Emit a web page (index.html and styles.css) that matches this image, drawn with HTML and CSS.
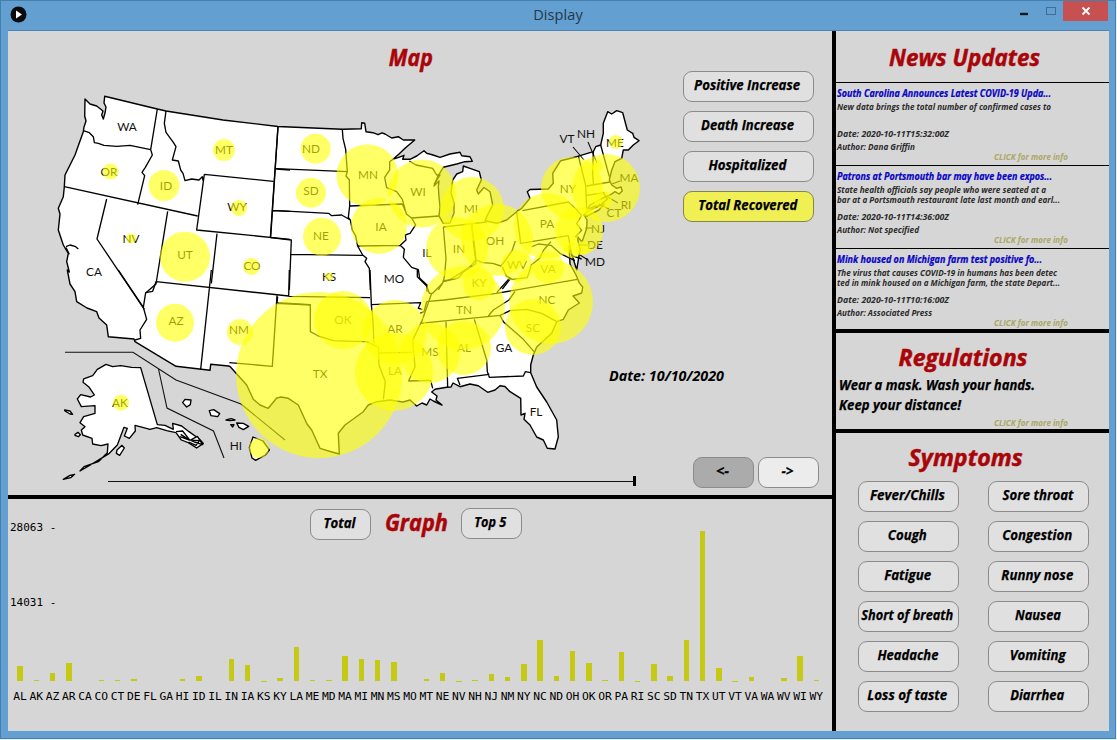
FILE: index.html
```html
<!DOCTYPE html>
<html lang="en">
<head>
<meta charset="utf-8">
<title>Display</title>
<link rel="stylesheet" href="styles.css">
</head>
<body>
<div class="window">
  <header class="titlebar">
    <svg class="app-icon" width="17" height="17" viewBox="0 0 17 17"><circle cx="8.5" cy="8.5" r="8" fill="#080b0e"/><path d="M6 4.5v8l6-4z" fill="#fff"/></svg>
    <span class="window-title">Display</span>
    <div class="controls">
      <svg width="48" height="22" viewBox="0 0 48 22"><path d="M5 13h8" stroke="#0d1a26" stroke-width="2.4"/><rect x="31.5" y="6.5" width="9" height="7" fill="none" stroke="#3f6f96"/></svg>
      <div class="close"><svg width="10" height="10" viewBox="0 0 10 10"><path d="M1.5 1.5l7 7M8.500 1.500l-7 7" stroke="#fff" stroke-width="1.8"/></svg></div>
    </div>
  </header>
  <main class="content">
    <section class="left">
      <div class="map-panel">
        <svg class="map" width="824" height="464" viewBox="8 31 824 464">
          <g class="land">
            <path d="M85 99L90 104 96.700 106 103 111 101.700 115 103.300 119 105 113 106 107 104 103 104.700 96.300 157.300 109 166 111 223 120 278 126.500 342.300 129.300 361.300 128.700 361.700 122.700 364.700 123.300 366 131.700 373 132.700 378 134.700 382 132.800 385 134 391.700 138 398.300 136.700 403.300 140 414.700 140 405 148.300 399 154 393.300 159 398 157.700 404 155.300 402.700 159.300 410 159.300 416.700 156 424 150.700 426.700 153.300 433 155 440 157.300 450 154 460 152.300 461.700 155.700 470 156.700 472.300 161.300 465 161.700 456.700 164 443.300 167.300 438 176 434 186 439 181 438.300 187 439 197 440 207 439 216 443.300 223.300 450 223 454 213 454 203 451 193 452.700 180 456.700 174 462.700 171.700 463.300 166 470 168.300 479.300 171.700 481.300 180 476.700 190 478.300 194 484 187.500 490 191.700 492.700 205 488.300 213.300 485 220.700 497 223.300 506.700 220 516.700 211.700 521.700 208.300 530 198.300 527.300 191.700 530 189.500 548.300 189 553.300 183.300 552.700 173.300 560.700 160.700 576.700 156.700 593.300 151.700 595.700 146.700 600.700 145 603.300 133.300 603.300 123.300 607.700 111.700 611.700 114 616.700 110.700 622.700 112.700 627.300 130 632.700 133.300 634 137.300 639 140.700 633.300 145 628.300 150 623.300 150 621.700 158.300 615 161.700 611.700 170 609.300 180 611.700 185 616.700 188.300 621 187 622.300 191 619 194 615 191.700 610 195 603 198 590 205 584 215 587 220 586.700 228.300 582 242 577 236 580 250 578.300 260 576.700 270 573 258 569 246 570 264 576 275 579.300 283 582.700 287 581.700 293 573 296 579.300 303 568.300 310 563.300 319.300 556.700 321.700 551.700 333.300 536.700 347 533.300 355 530.700 365 530.700 372.700 536.700 387 546.700 402 556.700 420 558.300 437 555 449 547.300 448.300 543.300 440 536.700 437 530 425 524 419.300 525 413.300 521 415 520.700 398.300 510 391.700 505 386.500 500 385.700 495 390 487.700 392.300 478.300 385.700 470 384 460 386.700 453 383 451 387 446.700 387.300 435 389.300 431.700 392 437 396 436 400 442 405 433.300 401 430 399 426.700 405 422 403 416.700 406 410 400 403 402 390 400 376.700 401.700 368.300 405 363.300 411.700 345 425 338.300 433.300 339.300 454 332 452 320 448.300 311.700 430 307 424 298.300 405 288.300 398.300 281 397 276.700 398 268.300 408.300 260 405 253.300 399.300 246.700 385 230 366.500 228.500 366 210.700 364.300 210 370.300 176 366.300 135 341.700 134 339 108.300 336.700 106.700 325 99 318 96.700 311.700 87 308 76.700 301.700 75 291.700 70 284 67.300 270 69.300 272 66.700 261.700 68.300 253.300 63.300 245 58.300 230 60 214 58.300 208.300 63.300 196.700 64.300 187 65 175 75 155 83.300 131.700 84 127 86 121 84.700 116Z"/>
            <path d="M584 215l8-6 12-5-5 6-12 6z"/>
            <g transform="translate(50 270) scale(.33333)">
              <path d="M168 283L188 290 212 287 245 292 272 293 322 464 345 466 370 478 368 460 395 468 417 485 448 507 460 520 440 534 415 518 394 510 378 488 350 482 320 473 300 478 278 472 255 466 256 483 238 505 223 498 232 475 222 472 202 525 178 550 133 578 90 603 102 590 145 575 172 548 174 522 153 527 128 522 126 505 98 495 94 480 105 470 90 458 101 440 135 430 135 407 94 410 82 387 92 374 122 381 133 375 116 350 99 337 101 327 128 317 142 298Z"/>
              <path d="M44 420l16 3 8 10-8-1-15-9zM75 493l9-6 7 7-6 6-10-4zM201 540l15-14 7 8-14 22-10-6zM40 628l20-12 14-3-12 10zM398 398l7-10 18 2-2 14-11 7zM478 422l13-3 18 12-6 9-20-3zM528 450l15-4 12 4-15 2zM542 464l10 0-4 7zM560 459l20 1 16 9-16 10-13-7zM609 501l30 12 19 27-12 15-29 16-11-7-8-31z"/>
              <path d="M378 485l20-2 22 28 22-12 16 25-25-8-18-8-23-15M390 500l28 10 30 2-10 14-22-10"/>
            </g>
          </g>
          <g class="borders">
            <g transform="translate(50 80) scale(.33333)">
              <path d="M100 152L118 158 130 170 133 188 145 190 162 196 200 199 240 196 302 209M322 87L302 209 307 225 286 262 276 277 284 287 263 374M348 93L343 130 348 157 370 187 378 200 367 240 385 243 392 270 399 280 405 302 425 297 447 300 457 290 459 302M463 283L670 304M463 283L440 450 720 478M684 140L661 474M679 267L720 270M668 392L720 394M43 320L443 408M170 357L141 477 283 688M353 394L318 612 286 640M501 461L484 610M48 500l12-5 15 4 10 8M48 503l10 20"/>
            </g>
            <g transform="translate(270 90) scale(.33333)">
              <path d="M24 109L2 443 64 450 58 600M18 236L232 245M8 361L176 370 185 377 215 375 241 390 247 420 257 438 263 468 278 495 290 505 285 515 298 535 301 600M63 493L278 496M217 118L219 145 227 178 232 245 228 258 238 270 239 348 397 342 407 365M239 348L235 382 241 390M263 468L391 466 408 450 406 435 420 430 437 405 425 384 409 372 397 328 380 305 350 293 344 262 359 240 359 215 370 207M425 384L507 378M391 466l12 12-3 24 25 30 20 7 4 26 22 20 0 20M418 213l20 12 50 10 12 20 10 0-18 28M520 411L528 505 524 555 520 575 505 600M520 411L650 396M604 404L618 520M520 575l45-11 15-18 38-26"/>
            </g>
            <g transform="translate(440 90) scale(.33333)">
              <path d="M96 402L108 510 90 530 60 550 28 570 8 573M108 510l20 8 30 2 25 8 15-20 18-25 10-30M230 365L242 460 385 437M247 362l138-26 22 20M407 356l18 20-15 25 15 20-20 20M415 198l22 88 3 72M460 185l-2 65 2 32M482 165l26 95M440 288l70-12M440 316l53-8M490 308l12 20-18 14M440 358l40-15M187 530l12 28 18 10 45-5 12-38 25-20 12-25 22-25M187 597l25-32M275 470l20-8 38 4 27 24 20 10 25 12M385 437l10 60 30 10"/>
            </g>
            <g transform="translate(50 270) scale(.33333)">
              <path d="M205 0L280 112 287 68 308 64 318 35 716 78M280 112L290 148 270 180 272 205 255 210M484 0L452 298M681 77L667 289 538 278M681 100L782 105"/>
            </g>
            <g transform="translate(230 270) scale(.33333)">
              <path d="M178 0L176 79M143 80L141 98 241 104 241 185 265 198 310 212 370 214 410 215 440 230M176 79L420 83M420 0L424 104 429 155 432 226 446 232 447 285 466 335 460 388M424 104L572 98 565 115 577 118M448 249L546 247M605 70L575 155 548 210 555 290 536 333 602 331 608 355M562 0l0 20 28 28 8 22 10 0 30-30"/>
            </g>
            <g transform="translate(420 270) scale(.33333)">
              <path d="M20 95L72 90 230 70 472 28M0 160L240 136 270 122 320 118 365 130 410 155M285 64L267 90 220 120 205 138M240 136L250 155 310 208 342 245M78 155L83 352M163 148L200 270 202 305 208 322 310 318 316 305 332 308M208 313L112 325 120 345M20 95l-8 30-12 5M230 68l40-45"/>
            </g>
          </g>
          <path class="inset" d="M65 352.300H133L176 380 241 404 285 440M158.500 369L167 408 213.500 431 224 458M573 147L584 160M588 142L597 163M620 181l-8 3M618 203l-12-7M609 209l-10-5M592 228h-7M588 245h-9M588 260l-8-5"/>
          <g class="names">
            <text x="127" y="130.500">WA</text><text x="109" y="175.500">OR</text><text x="94" y="276">CA</text><text x="131" y="243">NV</text><text x="166" y="190">ID</text><text x="224" y="154">MT</text><text x="237" y="211">WY</text><text x="185" y="259">UT</text><text x="252" y="270">CO</text><text x="311" y="152.500">ND</text><text x="311" y="195">SD</text><text x="321" y="240">NE</text><text x="329" y="280.500">KS</text><text x="368" y="179">MN</text><text x="381" y="230.500">IA</text><text x="394" y="283">MO</text><text x="418" y="196">WI</text><text x="427" y="257">IL</text><text x="471" y="213">MI</text><text x="459" y="253">IN</text><text x="495" y="245">OH</text><text x="479" y="287">KY</text><text x="517" y="269">WV</text><text x="548" y="273">VA</text><text x="547" y="228">PA</text><text x="568" y="193">NY</text><text x="567" y="143">VT</text><text x="586" y="138">NH</text><text x="615" y="147">ME</text><text x="629" y="182">MA</text><text x="626" y="209">RI</text><text x="614" y="217">CT</text><text x="598" y="233">NJ</text><text x="595" y="249">DE</text><text x="595" y="266">MD</text><text x="176" y="325">AZ</text><text x="239" y="334">NM</text><text x="320" y="378">TX</text><text x="343" y="324">OK</text><text x="395" y="332.500">AR</text><text x="395" y="375">LA</text><text x="430" y="356">MS</text><text x="464" y="352">AL</text><text x="504" y="352">GA</text><text x="464" y="314">TN</text><text x="547" y="304">NC</text><text x="533" y="332">SC</text><text x="536" y="415.500">FL</text><text x="120" y="407">AK</text><text x="236" y="449.500">HI</text>
          </g>
          <g class="bubbles" id="bubbles"></g>
          <path d="M108 481.500H634" stroke="#111" stroke-width="1.200"/><path d="M634.500 476v10" stroke="#000" stroke-width="3"/>
        </svg>
        <div class="overlay">
          <h2 class="heading map-heading"><span data-w="44">Map</span></h2>
          <nav class="metrics">
            <button><span data-w="106">Positive Increase</span></button>
            <button><span data-w="93">Death Increase</span></button>
            <button><span data-w="78">Hospitalized</span></button>
            <button class="active"><span data-w="99">Total Recovered</span></button>
          </nav>
          <p class="date"><span data-w="115" data-left>Date: 10/10/2020</span></p>
          <div class="steps"><button class="prev"><span data-w="13">&lt;-</span></button><button class="next"><span data-w="12">-&gt;</span></button></div>
        </div>
      </div>
      <div class="graph-panel">
        <div class="graph-head"><button><span data-w="32">Total</span></button><h2 class="heading"><span data-w="63">Graph</span></h2><button class="top"><span data-w="32">Top 5</span></button></div>
        <div class="axis"><span>28063 -</span><span>14031 -</span></div>
        <div class="chart" id="chart"></div>
      </div>
    </section>
    <aside class="right">
      <section class="news">
        <h2 class="heading"><span data-w="151">News Updates</span></h2>
        <article>
          <h3><span data-w="214" data-left>South Carolina Announces Latest COVID-19 Upda...</span></h3>
          <div class="desc"><span data-w="214" data-left>New data brings the total number of confirmed cases to</span></div>
          <div class="meta"><span data-w="112" data-left>Date: 2020-10-11T15:32:00Z</span><span data-w="78" data-left>Author: Dana Griffin</span></div>
          <div class="more"><span data-w="74" data-left>CLICK for more info</span></div>
        </article>
        <article>
          <h3><span data-w="215" data-left>Patrons at Portsmouth bar may have been expos...</span></h3>
          <div class="desc"><span data-w="209" data-left>State health officials say people who were seated at a</span><span data-w="223" data-left>bar at a Portsmouth restaurant late last month and earl...</span></div>
          <div class="meta"><span data-w="112" data-left>Date: 2020-10-11T14:36:00Z</span><span data-w="82" data-left>Author: Not specified</span></div>
          <div class="more"><span data-w="74" data-left>CLICK for more info</span></div>
        </article>
        <article>
          <h3><span data-w="205" data-left>Mink housed on Michigan farm test positive fo...</span></h3>
          <div class="desc"><span data-w="220" data-left>The virus that causes COVID-19 in humans has been detec</span><span data-w="223" data-left>ted in mink housed on a Michigan farm, the state Depart...</span></div>
          <div class="meta"><span data-w="112" data-left>Date: 2020-10-11T10:16:00Z</span><span data-w="95" data-left>Author: Associated Press</span></div>
          <div class="more"><span data-w="74" data-left>CLICK for more info</span></div>
        </article>
      </section>
      <section class="rules">
        <h2 class="heading"><span data-w="129">Regulations</span></h2>
        <p><span data-w="196" data-left>Wear a mask. Wash your hands.</span></p>
        <p><span data-w="122" data-left>Keep your distance!</span></p>
        <div class="more"><span data-w="74" data-left>CLICK for more info</span></div>
      </section>
      <section class="symptoms">
        <h2 class="heading"><span data-w="114">Symptoms</span></h2>
        <div class="grid">
          <button><span data-w="75">Fever/Chills</span></button><button><span data-w="71">Sore throat</span></button>
          <button><span data-w="39">Cough</span></button><button><span data-w="70">Congestion</span></button>
          <button><span data-w="47">Fatigue</span></button><button><span data-w="72">Runny nose</span></button>
          <button><span data-w="92">Short of breath</span></button><button><span data-w="46">Nausea</span></button>
          <button><span data-w="61">Headache</span></button><button><span data-w="56">Vomiting</span></button>
          <button><span data-w="80">Loss of taste</span></button><button><span data-w="54">Diarrhea</span></button>
        </div>
      </section>
    </aside>
  </main>
</div>
<script src="app.js"></script>
</body>
</html>
```
FILE: styles.css
```css
* { box-sizing: border-box; }
body { margin: 0; background: #e9f1f8; width: 1117px; height: 740px; overflow: hidden; font-family: "Open Sans", "Noto Sans", sans-serif; }
h2, h3, p { margin: 0; }
.window { width: 1116px; height: 739px; background: #639fd0; border: 1px solid #4380b0; padding: 0 7px 8px; }
.titlebar { height: 29px; display: grid; grid-template-columns: 80px 1fr 80px; }
.app-icon { margin: 5px 0 0 2px; }
.window-title { font-size: 14.5px; line-height: 28px; text-align: center; color: #24384a; letter-spacing: .1px; }
.controls { display: flex; justify-content: flex-end; height: 20px; }
.controls > svg { flex: none; }
.close { width: 45px; height: 20px; flex: none; background: #c75050; display: flex; align-items: center; justify-content: center; }
.content { width: 1101px; height: 701px; display: flex; background: #d6d6d6; border-top: 1px solid #4b85b3; }
.left { width: 828px; border-right: 4px solid #000; flex: none; }
.map-panel { height: 468px; border-bottom: 4px solid #000; display: grid; }
.map-panel > * { grid-area: 1 / 1; }
.map { display: block; }
.land path { fill: #fff; stroke: #000; stroke-width: 1.4; stroke-linejoin: round; }
.land g path { stroke-width: 4; }
.borders path { fill: none; stroke: #000; stroke-width: 4; stroke-linejoin: round; }
.inset { fill: none; stroke: #111; stroke-width: 1.1; }
.names { font: 11.8px Lato, sans-serif; text-anchor: middle; fill: #111; }
.bubbles circle { fill: #ff0; fill-opacity: .6; }
.overlay { display: grid; grid-template-columns: 675px 131px; grid-template-rows: 40px 290px 96px 38px; }
.heading { font-size: 23px; font-style: italic; font-weight: 700; line-height: 30px; color: #a90509; -webkit-text-stroke: .5px #a90509; display: flex; justify-content: center; white-space: nowrap; }
[data-w] { display: inline-block; white-space: nowrap; }
.map-heading { grid-column: 1 / 3; padding: 11px 0 0; }
.metrics { grid-column: 2; display: flex; flex-direction: column; gap: 9px; }
button { width: 100%; height: 31px; flex: none; border: 1px solid #8b8b8b; border-radius: 9px; background: #e0e0e0; font: italic 700 14.5px/18px "Open Sans", sans-serif; color: #000; -webkit-text-stroke: .25px #000; padding: 0 2px 3px 0; display: flex; align-items: center; justify-content: center; }
.active { background: #f0f055; border-color: #85854c; }
.date { grid-column: 1 / 3; padding: 5px 0 0 601px; font: italic 700 14px/20px "Open Sans", sans-serif; }
.steps { grid-column: 1 / 3; display: flex; gap: 4px; padding-left: 685px; }
.steps button { width: 61px; }
.prev { background: #ababab; }
.next { background: #ececec; }
.graph-panel { height: 232px; display: grid; grid-template-rows: 43px 140px; }
.graph-head { display: flex; padding: 9px 0 0 302px; }
.graph-head button { width: 61px; margin-top: 1px; }
.graph-head .top { margin-top: 0; }
.graph-head .heading { width: 90px; line-height: 28px; }
.axis { grid-row: 1 / 3; grid-column: 1; display: flex; flex-direction: column; gap: 60px; padding: 21px 0 0 2px; font: 11px/15px "DejaVu Sans Mono", monospace; color: #000; }
.graph-head { grid-row: 1; grid-column: 1; }
.chart { grid-row: 1 / 4; grid-column: 1; display: grid; grid-template-columns: repeat(50, 16.26px); padding: 32px 0 0 4px; align-items: start; }
.col { display: grid; grid-template-rows: 150px 12px; row-gap: 10px; justify-items: center; }
.bar { width: 5.5px; background: #c5c913; align-self: end; }
.code { font: 11.3px/12px "DejaVu Sans Mono", monospace; color: #000; }
.right { width: 273px; display: flex; flex-direction: column; }
.news { height: 302px; border-bottom: 4px solid #000; }
.news .heading { height: 51px; padding-top: 11px; padding-right: 16px; }
article { height: 83px; border-top: 1px solid #000; padding: 4px 0 0 1px; font-style: italic; font-weight: 700; color: #2c2c2c; }
h3 { font-size: 9.8px; line-height: 14px; height: 14px; color: #0804c4; -webkit-text-stroke: .2px #0804c4; }
h3 span, .desc span, .meta span, .more span { display: block; }
.desc { height: 20px; margin-top: 2px; font-size: 8.7px; line-height: 9.7px; }
.meta { margin-top: 4px; font-size: 8.9px; line-height: 13px; }
.more { font-size: 8.7px; line-height: 10px; margin: -1px 0 0 157px; color: #aaa767; font-style: italic; font-weight: 700; }
.rules { height: 100px; border-bottom: 4px solid #000; padding: 9px 0 0 3px; }
.rules .heading { padding-right: 22px; height: 33px; }
.rules p { font: italic 700 14.5px/20px "Open Sans", sans-serif; -webkit-text-stroke: .25px #000; height: 20px; }
.rules .more { margin: 3px 0 0 155px; }
.symptoms { padding-top: 9px; }
.symptoms .heading { padding-right: 14px; height: 39px; }
.grid { display: grid; grid-template-columns: 101px 101px; column-gap: 29px; row-gap: 9px; padding-left: 22px; }
```
FILE: app.js
```js
// Daily value per state, expressed as bar height in pixels.
const bars = "AL15 AK.7 AZ8 AR18 CA0 CO1.5 CT1.5 DE2.5 FL0 GA0 HI2 ID5 IL0 IN22 IA16 KS.4 KY3 LA34 ME.7 MD1.5 MA25 MI22 MN21 MS19.5 MO0 MT2.5 NE8 NV.4 NH1.5 NJ7.5 NM4 NY17 NC41 ND5 OH30.5 OK18 OR.8 PA29.5 RI.4 SC17 SD5 TN41 TX150 UT13 VT.3 VA4 WA0 WV3 WI25 WY.7".split(" ");
document.getElementById("chart").innerHTML = bars.map(b =>
  `<div class="col"><div class="bar" style="height:${b.slice(2)}px"></div><div class="code">${b.slice(0, 2)}</div></div>`).join("");

// Map bubbles: centre x, centre y, radius.
const bubbles = [[224,150,11],[110.500,171.500,8],[164,185.500,15.500],[239,208,8],[131,238.500,5],[185,256.700,25],[251.500,266.500,8.500],[315.700,148.700,15],[311,192.700,15],[322,236.700,19],[367.500,175.500,31],[379,226,28],[329,276.500,4],[422,193.500,34],[472,209,32],[457,248,31],[497,240,36],[547,226,33],[572,188,31],[606,188,34],[579,231,24],[615.700,142,7],[548,267,16],[517,266,16],[479,284,16],[463,308,42],[551,302,42],[533,327,28],[464,348,27],[430,353,30],[394,372,39],[395,332,32],[343,320,29],[319,375,83],[240,332,13],[175,322.700,19],[121,402.700,8],[259,448,10],[583,248,7],[572,250,8],[603,200,9],[597,166,6]];
document.getElementById("bubbles").innerHTML = bubbles.map(([x, y, r]) => `<circle cx="${x}" cy="${y}" r="${r}"/>`).join("");

// Condense each label to its set width.
document.querySelectorAll("[data-w]").forEach(el => {
  const range = document.createRange();
  range.selectNodeContents(el);
  const natural = range.getBoundingClientRect().width;
  el.style.transformOrigin = "left" in el.dataset ? "0 50%" : "50% 50%";
  el.style.transform = `scaleX(${el.dataset.w / natural})`;
});
```
